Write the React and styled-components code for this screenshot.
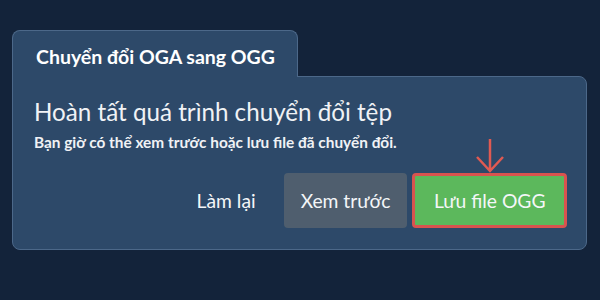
import React from 'react'
import styled, { createGlobalStyle } from 'styled-components'

const GlobalStyle = createGlobalStyle`
  body {
    margin: 0;
    background-color: #13233a;
    font-family: Lato, 'Noto Sans', sans-serif;
  }
`

const StyledPage = styled.div`
  width: 600px;
  height: 300px;
  box-sizing: border-box;
  padding: 30px 13px 0 12px;
`

const StyledTab = styled.div`
  position: relative;
  z-index: 1;
  width: 286px;
  height: 47px;
  box-sizing: border-box;
  margin-bottom: -1px;
  padding: 14px 0 0 23px;
  background-color: #2d4969;
  border: 1px solid #4c6889;
  border-bottom: none;
  border-radius: 8px 8px 0 0;
  color: #ffffff;
  font-size: 19.5px;
  font-weight: 700;
`

const StyledPanel = styled.div`
  height: 174px;
  box-sizing: border-box;
  padding: 20px 19px 0 21px;
  background-color: #2d4969;
  border: 1px solid #4c6889;
  border-radius: 0 8px 8px 8px;
  color: #f0f2f5;
  h2 {
    margin: 0;
    font-size: 24.2px;
    font-weight: 400;
    line-height: 30px;
  }
  p {
    margin: 6px 0 0 0;
    font-size: 15.4px;
    font-weight: 700;
    line-height: 19px;
  }
`

const StyledActions = styled.div`
  display: flex;
  justify-content: flex-end;
  align-items: center;
  gap: 5px;
  margin-top: 21px;
`

const StyledButton = styled.button`
  position: relative;
  height: 55px;
  box-sizing: border-box;
  padding: 0 ${(p) => (p.$variant === 'save' ? '18.5px' : p.$variant === 'muted' ? '17px' : '23px')};
  border: ${(p) => (p.$variant === 'save' ? '3px solid #d9534f' : 'none')};
  border-radius: 4px;
  background-color: ${(p) =>
    p.$variant === 'save' ? '#5cb85c' : p.$variant === 'muted' ? '#4f5e6e' : 'transparent'};
  color: #f4f6f8;
  font-family: inherit;
  font-size: 19.3px;
  font-weight: 400;
  cursor: pointer;
  .arrow {
    position: absolute;
    left: 50%;
    top: -38px;
    transform: translateX(-50%);
  }
`

const Arrow = () => (
  <svg className='arrow' width='34' height='36' viewBox='0 0 34 36' fill='none'>
    <path d='M17 1 V33 M4 19 L17 33 L30 19' stroke='#e05a52' strokeWidth='2.5' />
  </svg>
)

const App = () => {
  return (
    <>
      <GlobalStyle />
      <StyledPage>
        <StyledTab>Chuyển đổi OGA sang OGG</StyledTab>
        <StyledPanel>
          <h2>Hoàn tất quá trình chuyển đổi tệp</h2>
          <p>Bạn giờ có thể xem trước hoặc lưu file đã chuyển đổi.</p>
          <StyledActions>
            <StyledButton $variant='link'>Làm lại</StyledButton>
            <StyledButton $variant='muted'>Xem trước</StyledButton>
            <StyledButton $variant='save'>
              <Arrow />
              Lưu file OGG
            </StyledButton>
          </StyledActions>
        </StyledPanel>
      </StyledPage>
    </>
  )
}

export default App
